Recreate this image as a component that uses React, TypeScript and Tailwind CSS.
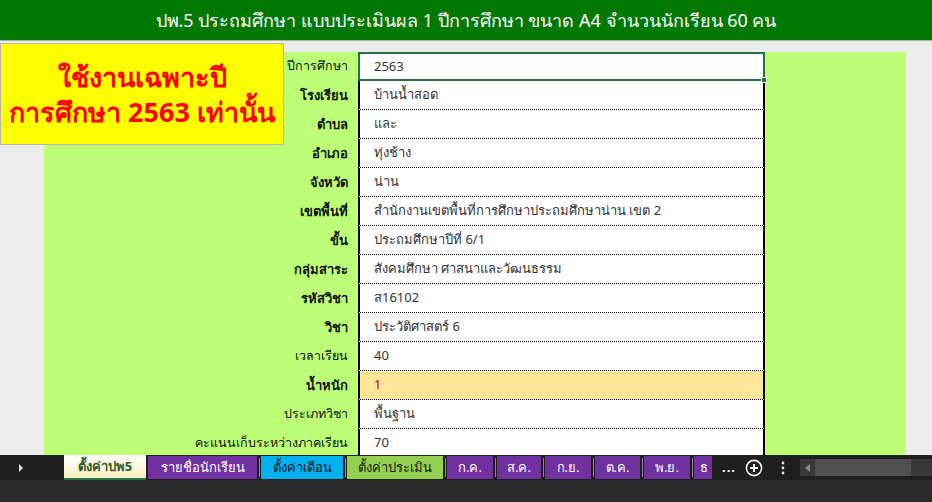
import React from "react";

const rows: { label: string; value: string; bold?: boolean; hl?: boolean }[] = [
  { label: "ปีการศึกษา", value: "2563" },
  { label: "โรงเรียน", value: "บ้านน้ำสอด", bold: true },
  { label: "ตำบล", value: "และ", bold: true },
  { label: "อำเภอ", value: "ทุ่งช้าง", bold: true },
  { label: "จังหวัด", value: "น่าน", bold: true },
  { label: "เขตพื้นที่", value: "สำนักงานเขตพื้นที่การศึกษาประถมศึกษาน่าน เขต 2", bold: true },
  { label: "ขั้น", value: "ประถมศึกษาปีที่ 6/1", bold: true },
  { label: "กลุ่มสาระ", value: "สังคมศึกษา ศาสนาและวัฒนธรรม", bold: true },
  { label: "รหัสวิชา", value: "ส16102", bold: true },
  { label: "วิชา", value: "ประวัติศาสตร์ 6", bold: true },
  { label: "เวลาเรียน", value: "40" },
  { label: "น้ำหนัก", value: "1", bold: true, hl: true },
  { label: "ประเภทวิชา", value: "พื้นฐาน" },
  { label: "คะแนนเก็บระหว่างภาคเรียน", value: "70" },
  { label: "", value: "" },
];

const tabs: { t: string; cls: string; w: string }[] = [
  { t: "รายชื่อนักเรียน", cls: "bg-[#7030a0] text-white", w: "w-[109px]" },
  { t: "ตั้งค่าเดือน", cls: "bg-[#00b0f0] text-[#1a1a1a]", w: "w-[82px]" },
  { t: "ตั้งค่าประเมิน", cls: "bg-[#92d050] text-[#1a1a1a]", w: "w-[96px]" },
  { t: "ก.ค.", cls: "bg-[#7030a0] text-white", w: "w-[46px]" },
  { t: "ส.ค.", cls: "bg-[#7030a0] text-white", w: "w-[44px]" },
  { t: "ก.ย.", cls: "bg-[#7030a0] text-white", w: "w-[46px]" },
  { t: "ต.ค.", cls: "bg-[#7030a0] text-white", w: "w-[45px]" },
  { t: "พ.ย.", cls: "bg-[#7030a0] text-white", w: "w-[46px]" },
];

export default function App() {
  return (
    <div
      className="w-[932px] h-[502px] flex flex-col bg-[#ececec] overflow-hidden"
      style={{ fontFamily: "Tahoma, 'Noto Sans', 'DejaVu Sans', sans-serif" }}
    >
      <header className="h-[41px] shrink-0 bg-[#017801] border-b border-[#9fb79f] flex items-center justify-center text-white text-[18px]">
        ปพ.5 ประถมศึกษา แบบประเมินผล 1 ปีการศึกษา ขนาด A4 จำนวนนักเรียน 60 คน
      </header>

      <main className="relative flex-1 min-h-0 overflow-hidden">
        <div className="ml-[44px] mt-[11px] w-[862px] h-full bg-[#bcfe76]">
          <div className="grid grid-cols-[314px_407px]">
            {rows.map((r, i) => (
              <React.Fragment key={i}>
                <div
                  className={`h-[29px] flex items-center justify-end pr-[10px] text-[#111] ${r.bold ? "font-bold text-[13px]" : "text-[12.5px]"}`}
                >
                  {r.label}
                </div>
                {i === 0 ? (
                  <div className="relative h-[29px] bg-white border-2 border-[#217346] flex items-center pl-[14px] text-[13px] text-[#333]">
                    {r.value}
                    <span className="absolute -right-[4px] -bottom-[4px] w-[6px] h-[6px] bg-[#217346] border border-white" />
                  </div>
                ) : (
                  <div
                    className={`h-[29px] border-l-2 border-r-2 border-black border-b border-b-black border-dotted flex items-center pl-[14px] text-[13px] ${r.hl ? "bg-[#ffe699] text-[#c00000]" : "bg-white text-[#333]"}`}
                    style={{ borderLeftStyle: "solid", borderRightStyle: "solid" }}
                  >
                    {r.value}
                  </div>
                )}
              </React.Fragment>
            ))}
          </div>
        </div>

        <div className="absolute left-0 top-[2px] w-[284px] h-[102px] bg-[#ffff00] border border-[#b5b5b5] flex flex-col items-center justify-center text-[#ff0000] font-bold text-[27px] leading-[35px]">
          <div>ใช้งานเฉพาะปี</div>
          <div>การศึกษา 2563 เท่านั้น</div>
        </div>
      </main>

      <div className="h-[25px] shrink-0 bg-[#1f1f1f] flex items-stretch text-[13px]">
        <div className="w-[64px] flex items-center pl-[18px]">
          <svg width="6" height="8" viewBox="0 0 6 8">
            <path d="M1 0 L5 4 L1 8 Z" fill="#e0e0e0" />
          </svg>
        </div>
        <div className="w-[82px] mr-[2px] bg-gradient-to-b from-[#ffffff] to-[#fdeec0] text-[#2e5e2e] font-bold flex items-center justify-center border-b-2 border-[#217346]">
          ตั้งค่าปพ5
        </div>
        {tabs.map((t, i) => (
          <div key={i} className="flex items-stretch">
            {i > 0 && <div className="w-[1px] my-[3px] ml-[2px] mr-[1px] bg-[#8a8a8a]" />}
            <div className={`${t.w} ${t.cls} my-[1px] flex items-center justify-center`}>{t.t}</div>
          </div>
        ))}
        <div className="flex items-stretch">
          <div className="w-[1px] my-[3px] ml-[2px] mr-[1px] bg-[#8a8a8a]" />
          <div className="w-[18px] my-[1px] bg-[#7030a0] text-white flex items-center overflow-hidden pl-[6px]">ธ</div>
        </div>
        <div className="w-[32px] ml-[1px] flex items-center justify-center text-white font-bold tracking-[1px]">...</div>
        <div className="w-[18px] flex items-center justify-center">
          <svg width="18" height="18" viewBox="0 0 18 18" fill="none" stroke="#f0f0f0" strokeWidth="1.6">
            <circle cx="9" cy="9" r="7.6" />
            <path d="M9 5v8M5 9h8" strokeWidth="2" />
          </svg>
        </div>
        <div className="w-[10px] ml-[15px] flex items-center justify-center">
          <svg width="4" height="14" viewBox="0 0 4 14">
            <circle cx="2" cy="2" r="1.4" fill="#e0e0e0" />
            <circle cx="2" cy="7" r="1.4" fill="#e0e0e0" />
            <circle cx="2" cy="12" r="1.4" fill="#e0e0e0" />
          </svg>
        </div>
        <div className="ml-[12px] flex-1 my-[4px] bg-[#383838] flex items-center">
          <div className="w-[15px] flex items-center justify-center">
            <svg width="5" height="8" viewBox="0 0 5 8">
              <path d="M5 0 L0 4 L5 8 Z" fill="#8a8a8a" />
            </svg>
          </div>
          <div className="w-[96px] h-full bg-[#505050]" />
        </div>
      </div>
      <div className="h-[22px] shrink-0 bg-[#2b2b2b]" />
    </div>
  );
}
